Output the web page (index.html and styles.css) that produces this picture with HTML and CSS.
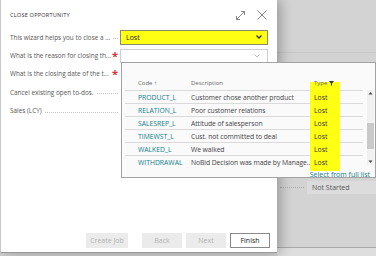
FILE: index.html
```html
<!DOCTYPE html>
<html lang="en">
<head>
    <meta charset="UTF-8">
    <meta name="viewport" content="width=device-width, initial-scale=1.0">
    <title>Close Opportunity</title>
    <link rel="stylesheet" href="styles.css">
</head>
<body>

    <div class="screen">
        <div class="dialog">
            <div class="dialog-head">
                <span class="title">CLOSE OPPORTUNITY</span>
                <div class="head-icons">
                    <svg width="11" height="11" viewBox="0 0 11 11" fill="none" stroke="#777" stroke-width="0.9">
                        <path d="M1.5 9.5 L9.5 1.5 M6 1.5 H9.5 V5 M1.5 6 V9.5 H5"/>
                    </svg>
                    <svg width="10" height="10" viewBox="0 0 10 10" fill="none" stroke="#777" stroke-width="0.9">
                        <path d="M0.5 0.5 L9.5 9.5 M9.5 0.5 L0.5 9.5"/>
                    </svg>
                </div>
            </div>

            <div class="form">
                <div class="row">
                    <div class="label-cell">
                        <span class="label">This wizard helps you to close a ...</span>
                        <span class="leader"></span>
                    </div>
                    <div class="field field-marked">
                        <span>Lost</span>
                        <svg width="6" height="4" viewBox="0 0 6 4" fill="none" stroke="#333" stroke-width="1.3"><path d="M0.5 0.5 L3 3 L5.5 0.5"/></svg>
                    </div>
                </div>
                <div class="row">
                    <div class="label-cell">
                        <span class="label">What is the reason for closing th...</span>
                        <span class="req">*</span>
                    </div>
                    <div class="field field-open">
                        <span></span>
                        <svg width="6" height="4" viewBox="0 0 6 4" fill="none" stroke="#aaa" stroke-width="0.8"><path d="M0.5 0.5 L3 3 L5.5 0.5"/></svg>
                    </div>
                </div>
                <div class="row">
                    <div class="label-cell">
                        <span class="label">What is the closing date of the t...</span>
                        <span class="req">*</span>
                    </div>
                    <div class="field"></div>
                </div>
                <div class="row">
                    <div class="label-cell">
                        <span class="label">Cancel existing open to-dos.</span>
                        <span class="leader"></span>
                    </div>
                    <div class="field"></div>
                </div>
                <div class="row">
                    <div class="label-cell">
                        <span class="label">Sales (LCY)</span>
                        <span class="leader"></span>
                    </div>
                    <div class="field"></div>
                </div>
            </div>

            <div class="footer">
                <button class="btn btn-off btn-job">Create Job</button>
                <button class="btn btn-off">Back</button>
                <button class="btn btn-off">Next</button>
                <button class="btn">Finish</button>
            </div>
        </div>

        <div class="backdrop">
            <div class="bg-top"></div>
            <div class="bg-row">
                <span class="leader"></span>
                <div class="bg-field">Not Started</div>
            </div>
            <div class="bg-bottom"></div>
        </div>

        <div class="lookup">
            <div class="marker"></div>
            <div class="lk-body">
                <div class="lk-list">
                    <div class="lk-head">
                        <span>Code &#8593;</span>
                        <span>Description</span>
                        <span class="lk-type">Type <svg width="5" height="5" viewBox="0 0 5 5"><path d="M0 0 H5 L3 2.5 V5 L2 4.3 V2.5 Z" fill="#333"/></svg></span>
                    </div>
                    <div id="rows"></div>
                </div>
                <div class="lk-scroll">
                    <svg width="7" height="7" viewBox="0 0 7 7"><path d="M1.5 4.5 L3.5 2 L5.5 4.5 Z" fill="#444"/></svg>
                    <div class="lk-thumb"></div>
                    <svg width="7" height="7" viewBox="0 0 7 7"><path d="M1.5 2.5 L3.5 5 L5.5 2.5 Z" fill="#444"/></svg>
                </div>
            </div>
            <div class="lk-foot">Select from full list</div>
        </div>
    </div>

    <script>
        const reasons = [
            { code: 'PRODUCT_L', description: 'Customer chose another product', type: 'Lost' },
            { code: 'RELATION_L', description: 'Poor customer relations', type: 'Lost' },
            { code: 'SALESREP_L', description: 'Attitude of salesperson', type: 'Lost' },
            { code: 'TIMEWST_L', description: 'Cust. not committed to deal', type: 'Lost' },
            { code: 'WALKED_L', description: 'We walked', type: 'Lost' },
            { code: 'WITHDRAWAL', description: 'NoBid Decision was made by Manage...', type: 'Lost' }
        ];

        const container = document.getElementById('rows');
        reasons.forEach(r => {
            const row = document.createElement('div');
            row.className = 'lk-row';
            row.innerHTML = `
                <span class="lk-code">${r.code}</span>
                <span class="lk-desc">${r.description}</span>
                <span class="lk-type">${r.type}</span>
            `;
            container.appendChild(row);
        });
    </script>
</body>
</html>
```

FILE: styles.css
```css
* {
    box-sizing: border-box;
}

body {
    margin: 0;
    width: 376px;
    height: 256px;
    overflow: hidden;
    background: #d3d3d3;
    font-family: 'Open Sans', sans-serif;
    font-size: 7px;
    color: #4a4a4a;
}

.screen {
    position: relative;
    display: flex;
    height: 256px;
}

.dialog {
    width: 277px;
    height: 253px;
    background: #fff;
    border-left: 1px solid #c8c8c8;
    border-bottom: 1px solid #9a9a9a;
    box-shadow: 3px 0 12px rgba(0, 0, 0, 0.3);
    display: flex;
    flex-direction: column;
    position: relative;
    z-index: 1;
}

.dialog-head {
    height: 28px;
    padding: 2px 10px 0 9px;
    display: flex;
    align-items: center;
    justify-content: space-between;
}

.title {
    font-size: 5.6px;
    letter-spacing: 0.2px;
    color: #333;
}

.head-icons {
    display: flex;
    align-items: center;
    gap: 11px;
}

.form {
    display: flex;
    flex-direction: column;
    padding: 0 9px;
}

.row {
    height: 18.4px;
    display: flex;
    align-items: center;
}

.label-cell {
    width: 110px;
    display: flex;
    align-items: center;
    padding-right: 2px;
    font-size: 6.4px;
    color: #555;
}

.label {
    white-space: nowrap;
}

.leader {
    flex: 1;
    height: 0;
    margin: 3px 0 0 3px;
    border-bottom: 1px dotted #c4c4c4;
}

.req {
    margin-left: auto;
    color: #d13438;
    font-size: 11px;
    font-weight: bold;
    line-height: 8px;
    height: 8px;
}

.field {
    width: 148px;
    height: 15px;
    padding: 0 5px;
    display: flex;
    align-items: center;
    justify-content: space-between;
}

.field-marked {
    background: #ffff14;
    border: 1px solid #8a8a6a;
    color: #222;
}

.field-open {
    height: 14px;
    border: 1px solid #cfcfcf;
    padding-right: 7px;
}

.footer {
    margin-top: auto;
    display: flex;
    justify-content: flex-end;
    gap: 4px;
    padding: 0 7px 4px 0;
}

.btn {
    width: 40px;
    height: 15px;
    padding: 0;
    font-family: inherit;
    font-size: 7px;
    background: #fff;
    border: 1px solid #8a8a8a;
    color: #222;
}

.btn-off {
    background: #ebebeb;
    border-color: #ebebeb;
    color: #b2b2b2;
}

.btn-job {
    width: 42px;
    margin-right: 10px;
}

.backdrop {
    flex: 1;
    display: flex;
    flex-direction: column;
}

.bg-top {
    height: 53px;
    border-bottom: 1px solid #c6c6c6;
}

.bg-row {
    margin-top: 128px;
    height: 13px;
    display: flex;
    align-items: center;
}

.bg-row .leader {
    flex: none;
    width: 24px;
    margin: 0 3px 0 3px;
    border-bottom-color: #aaa;
}

.bg-field {
    flex: 1;
    height: 13px;
    padding-left: 5px;
    display: flex;
    align-items: center;
    background: #dcdcdc;
    color: #555;
}

.bg-bottom {
    margin-top: auto;
    height: 9px;
    border-top: 1px solid #a9a9a9;
    background: #dedede;
}

.lookup {
    position: absolute;
    left: 121px;
    top: 62px;
    width: 255px;
    height: 116px;
    background: #fafafb;
    border: 1px solid #a3a3a3;
    padding-top: 13px;
    z-index: 2;
}

.marker {
    position: absolute;
    left: 188px;
    top: 19px;
    width: 30px;
    height: 89px;
    background: #ffff14;
    z-index: 1;
}

.lk-body {
    display: flex;
}

.lk-list {
    width: 238px;
    margin-left: 3px;
}

.lk-head,
.lk-row {
    display: grid;
    grid-template-columns: 53px 123px 1fr;
    align-items: center;
    padding-left: 13px;
    border-bottom: 1px solid #dadada;
    white-space: nowrap;
}

.lk-head {
    height: 15px;
    font-size: 6px;
    color: #666;
}

.lk-row {
    height: 13px;
    font-size: 6.8px;
    color: #444;
}

.lk-row:last-child {
    border-bottom: none;
}

.lk-code {
    color: #12808a;
}

.lk-desc {
    min-width: 0;
    letter-spacing: -0.08px;
    overflow: hidden;
}

.lk-type {
    position: relative;
    z-index: 2;
    display: flex;
    align-items: center;
    gap: 2px;
}

.lk-row .lk-type {
    color: #333;
}

.lk-scroll {
    width: 7px;
    height: 75px;
    margin: 14px 0 0 4px;
    display: flex;
    flex-direction: column;
    align-items: center;
    justify-content: space-between;
    background: #f1f1f1;
}

.lk-thumb {
    width: 7px;
    height: 26px;
    margin-top: 16px;
    background: #c9c9c9;
}

.lk-foot {
    margin-top: 1px;
    padding-right: 5px;
    text-align: right;
    color: #12808a;
}
```
